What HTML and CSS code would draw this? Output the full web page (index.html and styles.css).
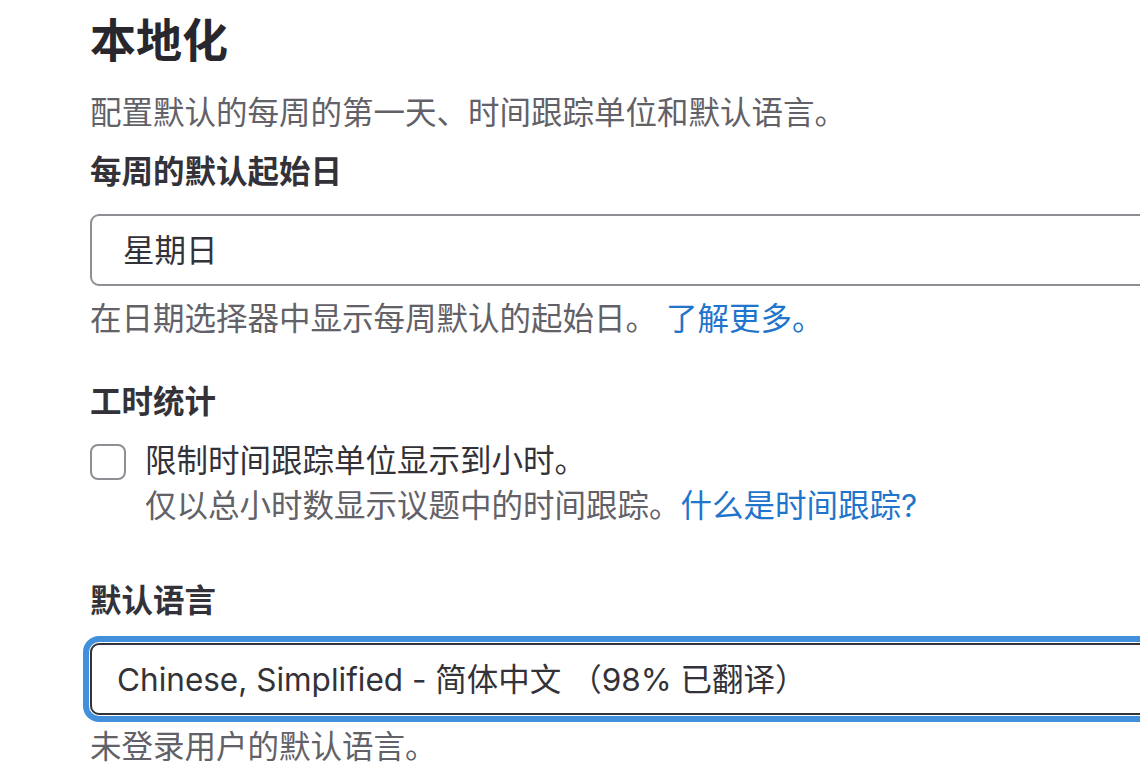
FILE: index.html
```html
<!DOCTYPE html>
<html>
<head>
    <title>本地化</title>
    <link rel="stylesheet" href="styles.css">
</head>
<body>
    <div class="page">
        <h2 class="title">本地化</h2>
        <p class="desc">配置默认的每周的第一天、时间跟踪单位和默认语言。</p>

        <div class="group">
            <label class="label" for="first_day">每周的默认起始日</label>
            <select id="first_day" class="control control-listbox">
                <option>星期日</option>
                <option>星期一</option>
                <option>星期六</option>
            </select>
            <p class="help">在日期选择器中显示每周默认的起始日。 <a href="#">了解更多。</a></p>
        </div>

        <div class="group group-time">
            <div class="label">工时统计</div>
            <div class="check-row">
                <input type="checkbox" id="time_hours" class="check">
                <label for="time_hours" class="check-text">
                    <span class="check-main">限制时间跟踪单位显示到小时。</span>
                    <span class="help">仅以总小时数显示议题中的时间跟踪。<a href="#">什么是时间跟踪?</a></span>
                </label>
            </div>
        </div>

        <div class="group group-lang">
            <label class="label" for="language">默认语言</label>
            <select id="language" class="control control-native is-focused">
                <option>Chinese, Simplified - 简体中文 （98% 已翻译）</option>
                <option>English</option>
            </select>
            <p class="help">未登录用户的默认语言。</p>
        </div>
    </div>
</body>
</html>
```

FILE: styles.css
```css
html, body {
    margin: 0;
    overflow: hidden;
    background: #fff;
}
body {
    font-family: "Inter", "Noto Sans CJK SC", sans-serif;
    font-size: 31.5px;
    line-height: 45px;
    color: #333238;
}
.page {
    padding: 13px 0 0 90px;
    width: 1050px;
}
.title {
    margin: 0;
    font-size: 46px;
    line-height: 54px;
    font-weight: 700;
    color: #28272d;
}
.desc {
    margin: 23px 0 0;
    color: #626168;
}
.group {
    margin-top: 14px;
}
.label {
    display: block;
    font-weight: 600;
    color: #333238;
}
.control {
    display: block;
    width: 1120px;
    height: 72px;
    margin-top: 20px;
    border: 2px solid #8f8e94;
    border-radius: 9px;
    background: #fff;
    font-family: inherit;
    font-size: 31.5px;
    color: #333238;
    -webkit-appearance: none;
    appearance: none;
    outline: none;
}
.control-listbox {
    padding: 0 0 0 31px;
}
.control-native {
    padding: 0 0 0 25px;
}
.is-focused {
    border-color: #333238;
    box-shadow: 0 0 0 1px #fff, 0 0 0 7px #428fdc;
}
.help {
    margin: 10px 0 0;
    color: #626168;
}
.help a {
    color: #1f75cb;
    text-decoration: none;
}
.group-time {
    margin-top: 38px;
}
.check-row {
    display: flex;
    margin-top: 14px;
}
.check {
    -webkit-appearance: none;
    appearance: none;
    flex: none;
    width: 36px;
    height: 36px;
    margin: 6px 19px 0 0;
    border: 2px solid #8f8e94;
    border-radius: 8px;
    background: #fff;
}
.check-text {
    display: flex;
    flex-direction: column;
}
.check-main {
    color: #333238;
}
.check-text .help {
    margin: 0;
}
.group-lang {
    margin-top: 50px;
}
.group-lang .control {
    margin-top: 20px;
}
.group-lang .help {
    margin-top: 9px;
}
```
